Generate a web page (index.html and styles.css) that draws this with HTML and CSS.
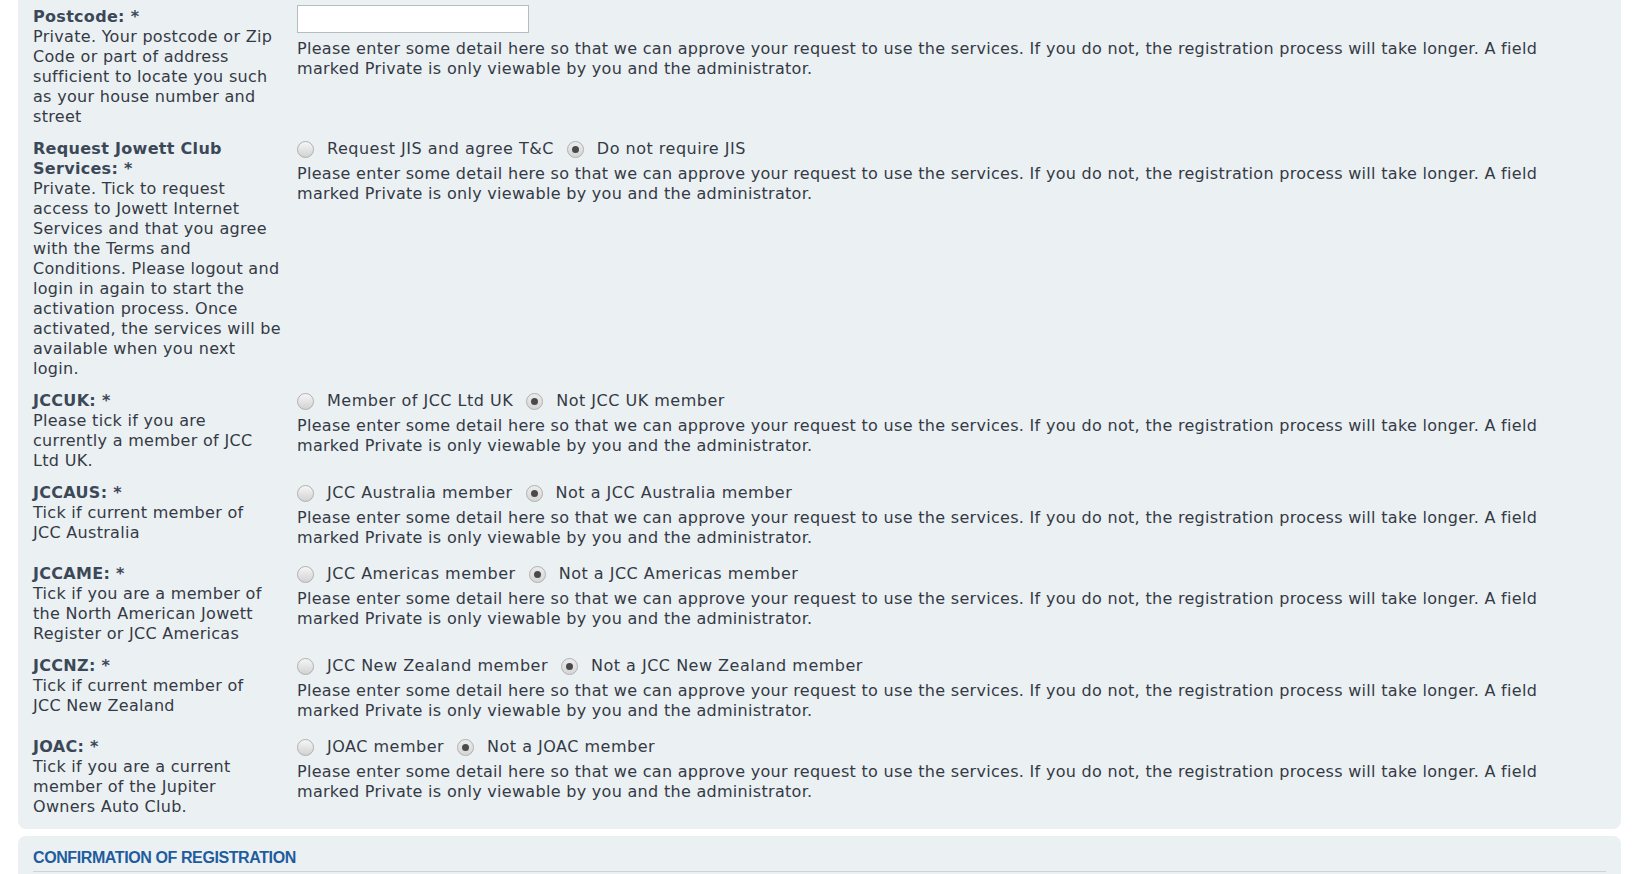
FILE: index.html
```html
<!DOCTYPE html>
<html>
<head>
  <meta charset="utf-8">
  <title>Registration</title>
  <link rel="stylesheet" href="styles.css">
</head>
<body>
  <div class="page">
    <div class="panel panel-fields">

      <div class="row">
        <div class="label">
          <b>Postcode: *</b>
          Private. Your postcode or Zip Code or part of address sufficient to locate you such as your house number and street
        </div>
        <div class="field">
          <input class="text-input" type="text">
          <p class="help">Please enter some detail here so that we can approve your request to use the services. If you do not, the registration process will take longer. A field marked Private is only viewable by you and the administrator.</p>
        </div>
      </div>

      <div class="row">
        <div class="label">
          <b>Request Jowett Club Services: *</b>
          Private. Tick to request access to Jowett Internet Services and that you agree with the Terms and Conditions. Please logout and login in again to start the activation process. Once activated, the services will be available when you next login.
        </div>
        <div class="field">
          <div class="choices">
            <label class="choice"><input type="radio" name="jis"> Request JIS and agree T&amp;C</label>
            <label class="choice"><input type="radio" name="jis" checked> Do not require JIS</label>
          </div>
          <p class="help">Please enter some detail here so that we can approve your request to use the services. If you do not, the registration process will take longer. A field marked Private is only viewable by you and the administrator.</p>
        </div>
      </div>

      <div class="row">
        <div class="label">
          <b>JCCUK: *</b>
          Please tick if you are currently a member of JCC Ltd UK.
        </div>
        <div class="field">
          <div class="choices">
            <label class="choice"><input type="radio" name="jccuk"> Member of JCC Ltd UK</label>
            <label class="choice"><input type="radio" name="jccuk" checked> Not JCC UK member</label>
          </div>
          <p class="help">Please enter some detail here so that we can approve your request to use the services. If you do not, the registration process will take longer. A field marked Private is only viewable by you and the administrator.</p>
        </div>
      </div>

      <div class="row">
        <div class="label">
          <b>JCCAUS: *</b>
          Tick if current member of JCC&nbsp;Australia
        </div>
        <div class="field">
          <div class="choices">
            <label class="choice"><input type="radio" name="jccaus"> JCC Australia member</label>
            <label class="choice"><input type="radio" name="jccaus" checked> Not a JCC Australia member</label>
          </div>
          <p class="help">Please enter some detail here so that we can approve your request to use the services. If you do not, the registration process will take longer. A field marked Private is only viewable by you and the administrator.</p>
        </div>
      </div>

      <div class="row">
        <div class="label">
          <b>JCCAME: *</b>
          Tick if you are a member of the North American Jowett Register or JCC Americas
        </div>
        <div class="field">
          <div class="choices">
            <label class="choice"><input type="radio" name="jccame"> JCC Americas member</label>
            <label class="choice"><input type="radio" name="jccame" checked> Not a JCC Americas member</label>
          </div>
          <p class="help">Please enter some detail here so that we can approve your request to use the services. If you do not, the registration process will take longer. A field marked Private is only viewable by you and the administrator.</p>
        </div>
      </div>

      <div class="row">
        <div class="label">
          <b>JCCNZ: *</b>
          Tick if current member of JCC&nbsp;New Zealand
        </div>
        <div class="field">
          <div class="choices">
            <label class="choice"><input type="radio" name="jccnz"> JCC New Zealand member</label>
            <label class="choice"><input type="radio" name="jccnz" checked> Not a JCC New Zealand member</label>
          </div>
          <p class="help">Please enter some detail here so that we can approve your request to use the services. If you do not, the registration process will take longer. A field marked Private is only viewable by you and the administrator.</p>
        </div>
      </div>

      <div class="row">
        <div class="label">
          <b>JOAC: *</b>
          Tick if you are a current member of the Jupiter Owners Auto Club.
        </div>
        <div class="field">
          <div class="choices">
            <label class="choice"><input type="radio" name="joac"> JOAC member</label>
            <label class="choice"><input type="radio" name="joac" checked> Not a JOAC member</label>
          </div>
          <p class="help">Please enter some detail here so that we can approve your request to use the services. If you do not, the registration process will take longer. A field marked Private is only viewable by you and the administrator.</p>
        </div>
      </div>

    </div>

    <div class="panel panel-confirm">
      <h2 class="section-title">CONFIRMATION OF REGISTRATION</h2>
    </div>
  </div>
</body>
</html>
```

FILE: styles.css
```css
html, body {
  margin: 0;
  padding: 0;
  background: #fff;
  font-family: "DejaVu Sans", Verdana, sans-serif;
  font-size: 16px;
  line-height: 20px;
  letter-spacing: 0.3px;
  color: #343a45;
}

.page {
  margin: 0 15px 0 18px;
}

.panel {
  background: #ebf0f3;
  border-radius: 8px;
  padding: 0 15px;
}

.panel-fields {
  display: flex;
  flex-direction: column;
  gap: 12px;
  border-top-left-radius: 0;
  border-top-right-radius: 0;
  padding-top: 7px;
  padding-bottom: 12px;
}

.row {
  display: grid;
  grid-template-columns: 248px 1fr;
  column-gap: 16px;
}

.label b {
  display: block;
  color: #3b4858;
}

.field {
  min-width: 0;
}

.text-input {
  display: block;
  box-sizing: border-box;
  width: 232px;
  height: 28px;
  margin: -2px 0 6px;
  border: 1px solid #b7bcc1;
  border-radius: 0;
  background: #fff;
}

.choices {
  display: flex;
  align-items: flex-start;
  gap: 13px;
  height: 25px;
}

.choice {
  display: flex;
  align-items: center;
  gap: 13px;
  height: 20px;
  white-space: nowrap;
  letter-spacing: 0.5px;
}

.choice input {
  appearance: none;
  -webkit-appearance: none;
  box-sizing: border-box;
  width: 17px;
  height: 17px;
  margin: 0;
  border: 1px solid #b0b0b0;
  border-radius: 50%;
  background: linear-gradient(#f6f6f6, #d2d2d2);
  position: relative;
}

.choice input:checked {
  background: linear-gradient(#ececec, #d6d6d6);
}

.choice input:checked::after {
  content: "";
  position: absolute;
  left: 4px;
  top: 4px;
  width: 7px;
  height: 7px;
  border-radius: 50%;
  background: #4a4a4a;
}

.help {
  margin: 0 0 4px;
  max-width: 1275px;
}

.panel-confirm {
  margin-top: 7px;
  padding-top: 12px;
  height: 60px;
  border-bottom-left-radius: 0;
  border-bottom-right-radius: 0;
}

.section-title {
  margin: 0;
  padding-bottom: 3px;
  border-bottom: 1px solid #cfd3d6;
  font-family: "Liberation Sans", Arial, sans-serif;
  font-size: 16px;
  line-height: 20px;
  letter-spacing: -0.4px;
  color: #1f5c9e;
}
```
